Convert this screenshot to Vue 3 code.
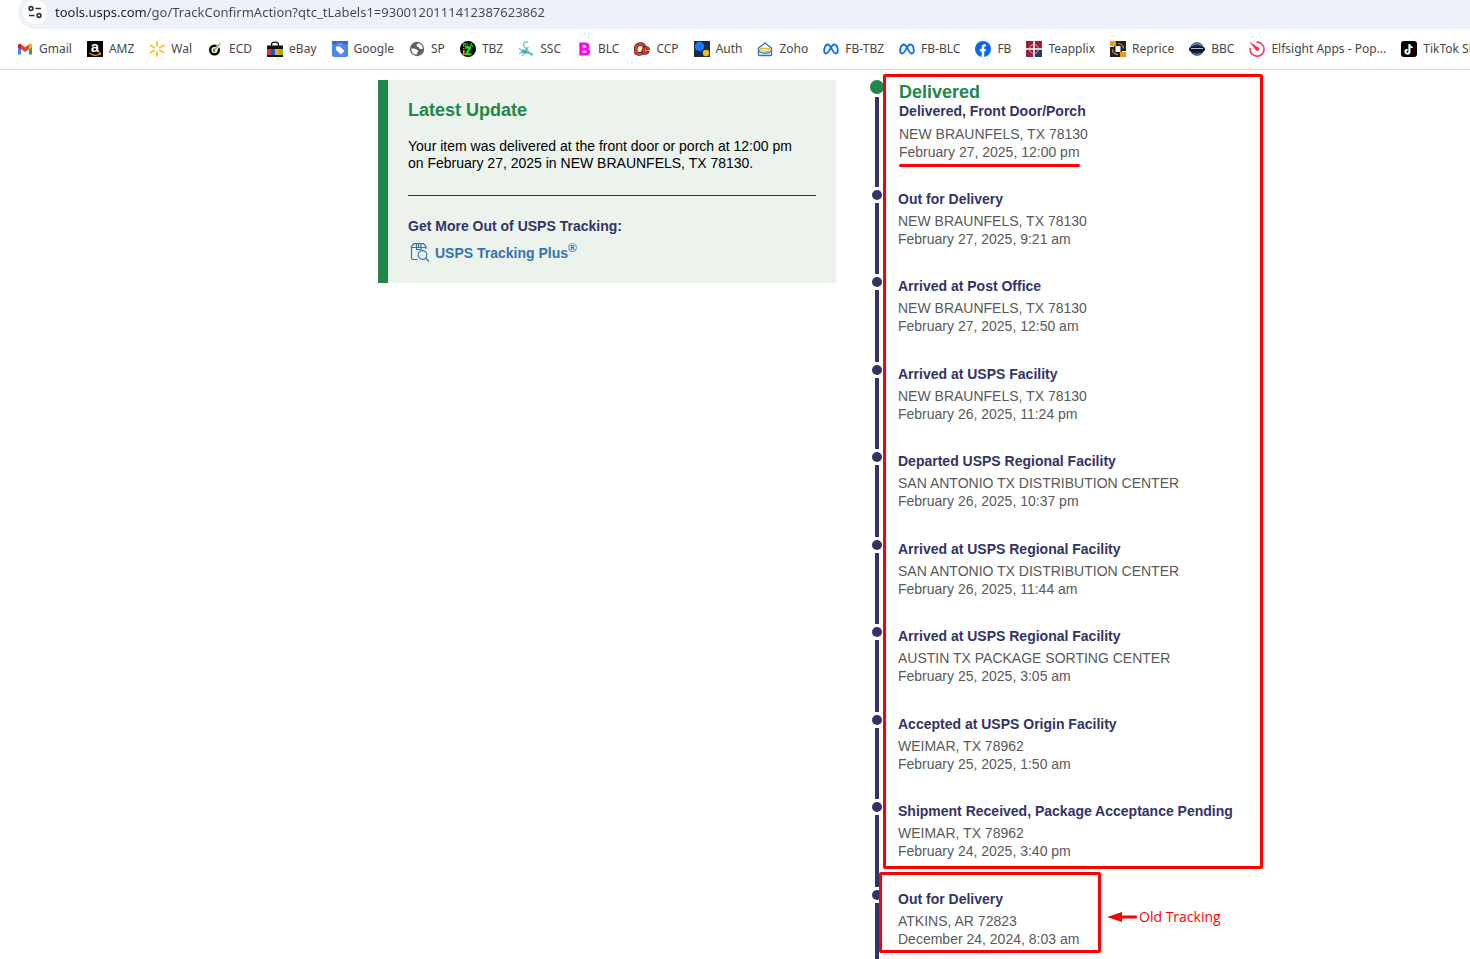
<script setup>
const bookmarks = [
  {
    label: 'Gmail',
    icon: '<path d="M1 4v9.500h3V7.200z" fill="#4285f4"/><path d="M15 4v9.500h-3V7.200z" fill="#34a853"/><path d="M1 5c0-2.200 1.800-2.600 3-1.700l4 3 4-3c1.200-.9 3-.5 3 1.700v1L8 11 1 6z" fill="#ea4335"/><path d="M12 3.400c1.200-1 3-.6 3 1.600v1.200l-3 2.200z" fill="#fbbc04"/><path d="M1 5c0-2.200 1.800-2.600 3-1.600v5L1 6.200z" fill="#c5221f"/>',
  },
  {
    label: 'AMZ',
    icon: '<rect width="16" height="16" fill="#000"/><text x="8" y="11" text-anchor="middle" font-family="Liberation Sans, sans-serif" font-weight="700" font-size="15" fill="#fff">a</text><path d="M2.500 12c3.500 2.800 7.500 2.800 10.500 1M11.500 12.300l2-.2-.5 2" fill="none" stroke="#f90" stroke-width="1.200"/>',
  },
  {
    label: 'Wal',
    icon: '<path d="M8 1.200v3.600M8 11.200v3.600M1.500 4.500l3.500 2M11 9.500l3.500 2M1.500 11.500l3.500-2M11 6.500l3.500-2" stroke="#ffc220" stroke-width="2" stroke-linecap="round"/>',
  },
  {
    label: 'ECD',
    icon: '<circle cx="7.500" cy="9" r="5.500" fill="#000"/><circle cx="7.500" cy="9" r="2.400" fill="#111" stroke="#fff" stroke-width="1.400"/><path d="M7.500 9.500L13 3" stroke="#fff" stroke-width="3"/><path d="M7 9.500L13 2.500" stroke="#6cc04a" stroke-width="1.600"/>',
  },
  {
    label: 'eBay',
    icon: '<path d="M4.500 5V3.500C4.500.2 11.500.2 11.500 3.500V5" fill="none" stroke="#111" stroke-width="1.300"/><path d="M0 4.500h16V16H0z" fill="#111"/><path d="M0 8h4v6H0z" fill="#e53238"/><path d="M4 8h4v6H4z" fill="#0064d2"/><path d="M8 8h4v6H8z" fill="#f5af02"/><path d="M12 8h4v6h-4z" fill="#86b817"/>',
  },
  {
    label: 'Google',
    icon: '<path d="M0 0h16v14.500L14.500 16h-13L0 14.500z" fill="#4b86ee"/><path d="M0 0h16v3H0z" fill="#3568c8"/><path d="M5.500 1.500c0 2 5 2 5 0" fill="none" stroke="#9cc0ff"/><path d="M4 5.500h4l4.500 4.500L9 13.500 4 9z" fill="#fff"/>',
  },
  {
    label: 'SP',
    icon: '<circle cx="8" cy="8" r="7.200" fill="#5f6368"/><path d="M9.500 2.200C8 3 7 4 8 5.200c1 .8 1.500.3 2 1.500.5 1.500 2 1.500 3.800 1.200 0-2.800-1.600-5-4.300-5.700z" fill="#fff"/><path d="M2.200 7.500c1.500 0 3-.5 4.300.5 1 .8 2.500.5 2.500 2s-1.200 1.500-1.500 3.800C4.500 13.600 2.200 11 2.200 7.500z" fill="#fff"/>',
  },
  {
    label: 'TBZ',
    icon: '<circle cx="8" cy="8" r="8" fill="#000"/><g font-family="Liberation Sans, sans-serif" font-weight="700" fill="#1cf01c"><text x="8" y="6" font-size="5" text-anchor="middle">BLA</text><text x="2.500" y="14" font-size="9" fill="#d8e62a">i</text><text x="5" y="14" font-size="10.500" stroke="#1cf01c" stroke-width=".6">Z</text></g>',
  },
  {
    label: 'SSC',
    icon: '<path d="M10 1.800C7.500-.3 4.500 2 6 5.200c1 2 4 3 4.300 5.300" fill="none" stroke="#6cc5c8" stroke-width="1.400"/><path d="M3 9.500c3-2 6-.5 8 2.500l-4 1c-2 0-3.500-1.500-4-3.500z" fill="#48adb2"/><path d="M1 7.500l4 3M1 12.500l4-1.500M4 15l3-3.500M7.500 8.500l3-2.500M10 10.500l5 3M10 12l4.500 2.500" stroke="#5bbcc0" stroke-width="1.100"/>',
  },
  {
    label: 'BLC',
    icon: '<text x="8.500" y="14" text-anchor="middle" font-family="Liberation Sans Narrow, Liberation Sans, sans-serif" font-weight="700" font-size="16" fill="#f0f" stroke="#f0f" stroke-width=".8">B</text>',
  },
  {
    label: 'CCP',
    icon: '<g font-family="Liberation Sans, sans-serif" font-weight="700" font-style="italic" fill="#e8402a" stroke="#5c1a10" stroke-width="1.600" paint-order="stroke"><text x="-.5" y="14" font-size="16">C</text><text x="8" y="13" font-size="13">c</text></g>',
  },
  {
    label: 'Auth',
    icon: '<path d="M0 0h16v16H0z" fill="#1b2a4a"/><circle cx="5.500" cy="5.500" r="4.700" fill="#1677ff"/><circle cx="12" cy="12" r="3.200" fill="#fdb913"/>',
  },
  {
    label: 'Zoho',
    icon: '<path d="M1.500 7L8 2l6.500 5v6.500c0 .8-.5 1-1 1h-11c-.8 0-1-.4-1-1z" fill="#fff" stroke="#2873b0" stroke-width="1.300"/><path d="M3.500 7.500h9c.5 4-8.500 4-9 0z" fill="#fff" stroke="#f4b433" stroke-width="1.300"/><path d="M1.500 8.500c1 5 12 5 13 0" fill="none" stroke="#3d8acb" stroke-width="1.300"/>',
  },
  { label: 'FB-TBZ', icon: 'meta' },
  { label: 'FB-BLC', icon: 'meta' },
  {
    label: 'FB',
    icon: '<circle cx="8" cy="8" r="8" fill="#0866ff"/><path d="M6.700 16v-5.500H4.800V8h1.900V6.500c0-2.500 1.300-3.500 4.200-3.100v2.200C9.500 5.500 9.200 5.900 9.200 6.800V8h1.700l-.4 2.500H9.200V16z" fill="#fff"/>',
  },
  {
    label: 'Teapplix',
    icon: '<path d="M0 0h7.500v7.500H0zM8.500 0H16v7.500H8.500zM0 8.500h7.500V16H0z" fill="#98203b"/><path d="M8.500 8.500H16V16H8.500z" fill="#22396f"/><circle cx="8" cy="8" r="4.500" fill="none" stroke="#d6a8b2"/><path d="M8 0v16M0 8h16" stroke="#fff"/>',
  },
  {
    label: 'Reprice',
    icon: '<path d="M0 0h16v16H0z" fill="#222"/><path d="M0 0h6v5H0zM10 11h6v5h-6z" fill="#f7981d"/><path d="M5.500 5h5v6h-5z" fill="#fff"/><path d="M8 2.500c3 0 5.500 2 5.500 5M8 13.500c-3 0-5.500-2-5.500-5" fill="none" stroke="#f7981d" stroke-width="1.200"/><path d="M0 5.500h4M12 10.500h4" stroke="#fff"/>',
  },
  {
    label: 'BBC',
    icon: '<circle cx="8" cy="8" r="6.800" fill="#1b2c4e"/><path d="M3 4.500c3-2 7-2 10 0" stroke="#6c8cba" stroke-width="1.500" fill="none"/><rect y="6" width="16" height="4.500" rx="2" fill="#0c1322"/><path d="M2 7.500h12" stroke="#b9c6da"/><path d="M4 12.500c3 1.500 5 1.500 8 0" stroke="#3f78c2" stroke-width="1.400" fill="none"/>',
  },
  {
    label: 'Elfsight Apps - Pop...',
    icon: '<path d="M7.500 1.200A7 7 0 1 1 1.200 7" fill="none" stroke="#f93262" stroke-width="1.600"/><path d="M0 .5l9.800 6.300c1.500 1.800-.8 4.200-2.700 2.700z" fill="#f93262"/>',
  },
  {
    label: 'TikTok Shop',
    icon: '<rect width="16" height="16" rx="3" fill="#000"/><g fill="none" stroke-width="1.500"><path d="M8 3v7.500a2 2 0 1 1-2-2M8 3c0 2 1.500 3 3 3" stroke="#25f4ee"/><path d="M9 3.500V11a2 2 0 1 1-2-2M9 3.500c0 2 1.500 3 3 3" stroke="#fe2c55"/><path d="M8.500 3.200v7.500a2 2 0 1 1-2-2M8.500 3.200c0 2 1.500 3 3 3" stroke="#fff"/></g>',
  },
]

const metaIcon =
  '<path d="M1.200 10.500C1 6.500 2.800 3.500 4.800 3.500c3.400 0 4.400 9 7.900 9 1.600 0 2.200-1.200 2.100-3.200-.1-3.200-1.500-5.800-3.600-5.800-3.300 0-4.700 9-8.100 9-1.200 0-1.900-.7-1.900-2z" fill="none" stroke="#0a6df0" stroke-width="1.800"/>'

const current = [
  { title: 'Delivered, Front Door/Porch', place: 'NEW BRAUNFELS, TX 78130', date: 'February 27, 2025, 12:00 pm', status: 'Delivered' },
  { title: 'Out for Delivery', place: 'NEW BRAUNFELS, TX 78130', date: 'February 27, 2025, 9:21 am' },
  { title: 'Arrived at Post Office', place: 'NEW BRAUNFELS, TX 78130', date: 'February 27, 2025, 12:50 am' },
  { title: 'Arrived at USPS Facility', place: 'NEW BRAUNFELS, TX 78130', date: 'February 26, 2025, 11:24 pm' },
  { title: 'Departed USPS Regional Facility', place: 'SAN ANTONIO TX DISTRIBUTION CENTER', date: 'February 26, 2025, 10:37 pm' },
  { title: 'Arrived at USPS Regional Facility', place: 'SAN ANTONIO TX DISTRIBUTION CENTER', date: 'February 26, 2025, 11:44 am' },
  { title: 'Arrived at USPS Regional Facility', place: 'AUSTIN TX PACKAGE SORTING CENTER', date: 'February 25, 2025, 3:05 am' },
  { title: 'Accepted at USPS Origin Facility', place: 'WEIMAR, TX 78962', date: 'February 25, 2025, 1:50 am' },
  { title: 'Shipment Received, Package Acceptance Pending', place: 'WEIMAR, TX 78962', date: 'February 24, 2025, 3:40 pm' },
]
const old = [{ title: 'Out for Delivery', place: 'ATKINS, AR 72823', date: 'December 24, 2024, 8:03 am' }]
const groups = [
  { name: 'current', events: current },
  { name: 'old', events: old },
]
</script>

<template>
  <div class="page">
    <header class="browser">
      <div class="address">
        <button class="site-info" type="button" aria-label="View site information">
          <svg viewBox="0 0 16 16" width="16" height="16" fill="none" stroke="#333" stroke-width="1.600">
            <circle cx="4" cy="4.500" r="1.900" /><path d="M8.500 4.500H14M2 11.500h5.500" /><circle cx="12" cy="11.500" r="1.900" />
          </svg>
        </button>
        <input
          class="url"
          type="text"
          aria-label="Address"
          spellcheck="false"
          value="tools.usps.com/go/TrackConfirmAction?qtc_tLabels1=9300120111412387623862"
        />
      </div>
      <nav class="bookmarks" aria-label="Bookmarks">
        <a v-for="b in bookmarks" :key="b.label" class="bookmark" href="#">
          <svg viewBox="0 0 16 16" width="16" height="16" aria-hidden="true" v-html="b.icon === 'meta' ? metaIcon : b.icon"></svg>
          <span>{{ b.label }}</span>
        </a>
      </nav>
    </header>

    <main class="content">
      <section class="card">
        <h2>Latest Update</h2>
        <p>Your item was delivered at the front door or porch at 12:00 pm on February 27, 2025 in NEW BRAUNFELS, TX 78130.</p>
        <hr />
        <h3>Get More Out of USPS Tracking:</h3>
        <a class="plus" href="#">
          <svg viewBox="0 0 20 20" width="20" height="20" fill="none" stroke="#3573b1" stroke-width="1.200" aria-hidden="true">
            <path d="M7.500 16.500H3c-.8 0-1.500-.6-1.500-1.500V3.500L4 .6h9.500L16 3.500V6M1.500 4.500H16M6.500 .6v5.900h4.500V.6M8.700 .6v4" />
            <circle cx="12.500" cy="12" r="4.300" /><path d="M15.500 15L19 18.500" />
          </svg>
          <span>USPS Tracking Plus<sup>®</sup></span>
        </a>
      </section>

      <section class="timeline" aria-label="Tracking history">
        <div v-for="g in groups" :key="g.name" class="group" :class="g.name">
          <ol>
            <li v-for="(e, i) in g.events" :key="i" class="event" :class="{ latest: e.status }">
              <div class="rail"><span class="dot"></span><span class="line"></span></div>
              <div class="details">
                <h2 v-if="e.status">{{ e.status }}</h2>
                <h3>{{ e.title }}</h3>
                <p>{{ e.place }}</p>
                <p class="date">{{ e.date }}</p>
              </div>
            </li>
          </ol>
          <div class="outline">
            <div v-if="g.name === 'old'" class="note">
              <svg viewBox="0 0 30 10" width="30" height="10" aria-hidden="true">
                <path d="M0 5L15 0v10z" fill="#f00" /><path d="M14 5h14.500" stroke="#f00" stroke-width="3" stroke-linecap="round" />
              </svg>
              <span>Old Tracking</span>
            </div>
          </div>
        </div>
      </section>
    </main>
  </div>
</template>

<style>
body { background: #fff; }
</style>

<style scoped>
.page {
  min-height: 100vh;
  display: flex;
  flex-direction: column;
  overflow: hidden;
  font-family: "Liberation Sans", Arial, sans-serif;
  font-size: 14px;
  line-height: 18px;
}
h2, h3, p, ol { margin: 0; padding: 0; }
ol { list-style: none; }
h2 { color: #218748; font-size: 18px; line-height: 20px; }
h3 { color: #333366; font-size: 14px; line-height: 18px; }

.browser {
  border-bottom: 1px solid #dadce0;
  font-family: "Noto Sans", "Open Sans", sans-serif;
}
.address {
  display: flex;
  align-items: center;
  gap: 8px;
  height: 34px;
  margin: -5px 0 0 18px;
  padding-left: 5px;
  box-sizing: border-box;
  border-radius: 17px 0 0 17px;
  background: #edf1fa;
}
.site-info {
  display: flex;
  align-items: center;
  justify-content: center;
  width: 24px;
  height: 24px;
  padding: 0;
  border: 0;
  border-radius: 12px;
  background: #fff;
}
.url {
  flex: 1;
  min-width: 0;
  padding: 0;
  border: 0;
  outline: 0;
  font: 13px/20px "Noto Sans", "Open Sans", sans-serif;
  color: #474747;
  background: linear-gradient(90deg, #1f1f1f 91px, #474747 91px);
  background-clip: text;
  -webkit-text-fill-color: transparent;
}
.bookmarks {
  display: flex;
  align-items: center;
  gap: 15px;
  height: 40px;
  padding-left: 17px;
  overflow: hidden;
}
.bookmark {
  flex: none;
  display: flex;
  align-items: center;
  gap: 6px;
  color: #474747;
  font-size: 12px;
  line-height: 18px;
  white-space: nowrap;
  text-decoration: none;
}

.content {
  flex: 1;
  display: grid;
  grid-template-columns: 458px 1fr;
  column-gap: 34px;
  width: 100%;
  max-width: 1170px;
  margin: 0 auto;
  padding: 10px 0 0 228px;
  box-sizing: border-box;
}
.card {
  align-self: start;
  padding: 18px 20px 20px;
  border-left: 10px solid #218748;
  background: #ebf3ec;
}
.card h2 { line-height: 24px; }
.card p { margin-top: 16px; padding-right: 16px; line-height: 17px; color: #000; }
.card hr { height: 1px; margin: 23px 0 21px; border: 0; background: #333366; }
.plus {
  display: flex;
  align-items: center;
  gap: 5px;
  margin-top: 8px;
  padding-left: 2px;
  color: #3573b1;
  font-weight: 700;
  line-height: 20px;
  text-decoration: none;
}
.plus sup { font-size: 12px; line-height: 0; }

.timeline { display: flex; flex-direction: column; }
.group { position: relative; }
.group.old { flex: 1; display: flex; }
.event { display: flex; gap: 14px; }
.group.old .event { height: 100%; }
.rail {
  flex: none;
  width: 14px;
  display: flex;
  flex-direction: column;
  align-items: center;
}
.dot {
  width: 10px;
  height: 10px;
  margin: 3px 0;
  border-radius: 50%;
  background: #333366;
}
.line { flex: 1; width: 4px; background: #333366; }
.details { padding: 3px 0 26px; color: #595959; white-space: nowrap; }
.event:nth-child(odd) .details { padding-bottom: 27px; }
.event h3 { margin-bottom: 4px; }
.latest { gap: 15px; }
.latest .dot { width: 14px; height: 14px; margin-top: 0; background: #218748; }
.event.latest .details { padding: 2px 0 26px; }
.latest h3 { margin-bottom: 5px; }
.latest .date { position: relative; width: fit-content; }
.latest .date::after {
  content: "";
  position: absolute;
  left: 0;
  right: 0;
  bottom: -6px;
  height: 3px;
  border-radius: 2px;
  background: #f00;
}
.group.old .event .details { padding-bottom: 0; }

.outline {
  position: absolute;
  box-sizing: border-box;
  border: 3px solid #f00;
  border-radius: 2px;
}
.current .outline { top: -6px; bottom: 18px; left: 13px; width: 380px; }
.old .outline { top: -15px; left: 9px; width: 222px; height: 81px; }
.note {
  position: absolute;
  top: 33px;
  left: 225px;
  display: flex;
  align-items: center;
  gap: 2px;
  color: #f00;
  font-family: "Open Sans", sans-serif;
  font-size: 14px;
  white-space: nowrap;
}
</style>
